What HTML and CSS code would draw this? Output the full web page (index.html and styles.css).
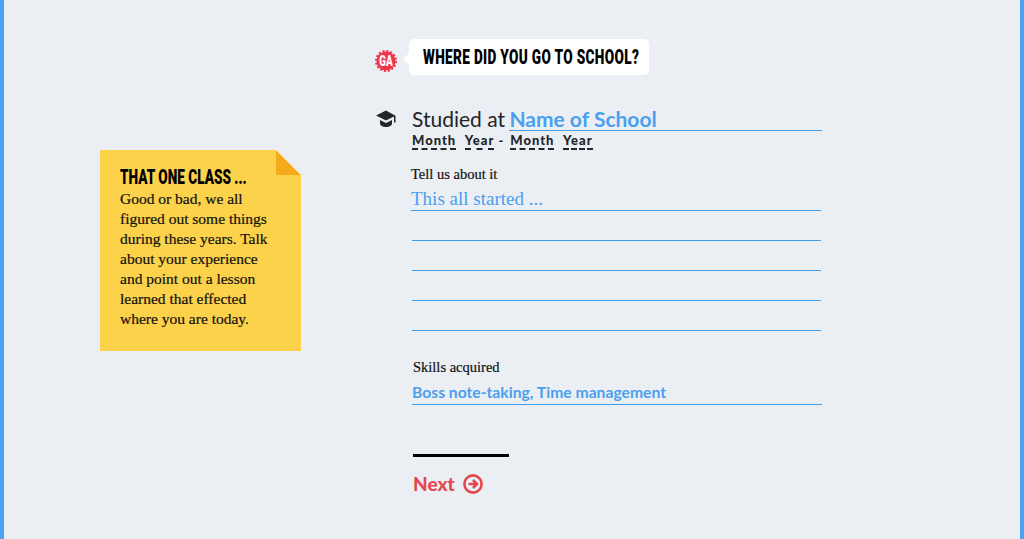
FILE: index.html
```html
<!DOCTYPE html>
<html lang="en">
<head>
  <meta charset="UTF-8" />
  <title>Where did you go to school?</title>
  <link rel="stylesheet" href="styles.css">
</head>
<body>
  <div class="page">
    <aside class="note">
      <h3><span>THAT ONE CLASS ...</span></h3>
      <p>Good or bad, we all<br>figured out some things<br>during these years. Talk<br>about your experience<br>and point out a lesson<br>learned that effected<br>where you are today.</p>
    </aside>

    <main class="content">
      <div class="question">
        <svg class="badge" width="22" height="22" viewBox="0 0 22 22">
          <circle cx="11" cy="11" r="9.500" fill="#f0364f"/>
          <circle cx="11" cy="11" r="10" fill="none" stroke="#f0364f" stroke-width="2" stroke-dasharray="2.100 1.830"/>
          <text class="badge-text" text-anchor="middle" transform="translate(11 15.500) scale(0.7 1)">GA</text>
        </svg>
        <h1 class="bubble"><span>WHERE DID YOU GO TO SCHOOL?</span></h1>
      </div>

      <div class="studied">
        <svg class="cap" width="20" height="18" viewBox="0 0 20 18">
          <path fill="#22252a" d="M10 0.500L0 5.500l10 5 8-4v6h1.500V5.700L10 0.500z"/>
          <path fill="#22252a" d="M4 10v3.700c0 1.500 2.800 3.300 6 3.300s6-1.800 6-3.300V10l-6 3z"/>
        </svg>
        <div class="studied-text">
          <div class="title">Studied at <span class="school">Name of School</span></div>
          <div class="dates"><span>Month</span> <span class="year">Year</span><b>-</b><span>Month</span> <span class="year">Year</span></div>
        </div>
      </div>

      <div class="tell">
        <label class="tell-label">Tell us about it</label>
        <div class="line first">This all started ...</div>
        <div class="line"></div>
        <div class="line"></div>
        <div class="line"></div>
        <div class="line"></div>
      </div>

      <div class="skills">
        <label>Skills acquired</label>
        <div class="skills-input">Boss note-taking, Time management</div>
      </div>

      <div class="rule"></div>
      <a class="next" href="#">Next
        <svg width="20" height="20" viewBox="0 0 20 20" fill="none" stroke="#e5474f" stroke-width="2.600">
          <circle cx="10" cy="10" r="8.600"/>
          <path d="M5.500 10h8M10 6l4 4-4 4"/>
        </svg>
      </a>
    </main>
  </div>
</body>
</html>
```

FILE: styles.css
```css
* {
  box-sizing: border-box;
}

body {
  margin: 0;
  background: #ebeff3;
  color: #22252a;
  font-family: 'Lato', sans-serif;
}

.page {
  display: flex;
  height: 539px;
  padding-left: 96px;
  border-left: 4px solid #4aa3f5;
  border-right: 4px solid #4aa3f5;
  overflow: hidden;
}

/* sticky note */
.note {
  position: relative;
  width: 201px;
  height: 201px;
  margin-top: 150px;
  padding: 17px 0 0 20px;
  background: #fbd249;
  color: #111;
  clip-path: polygon(0 0, 176px 0, 201px 25px, 201px 201px, 0 201px);
}

.note::after {
  content: '';
  position: absolute;
  top: 0;
  right: 0;
  width: 25px;
  height: 25px;
  background: linear-gradient(to top right, #f5ab19 50%, transparent 50%);
}

.note h3 {
  margin: 0;
  font-family: 'Roboto', sans-serif;
  font-size: 20px;
  line-height: 20px;
  font-weight: 900;
  color: #000;
  white-space: nowrap;
}

/* no condensed face installed, so squeeze the heading */
.note h3 span,
.bubble span {
  display: inline-block;
  transform: scaleX(0.68);
  transform-origin: left center;
}

.note p {
  margin: 2px 0 0;
  font-family: 'Liberation Serif', serif;
  font-size: 15.500px;
  line-height: 20px;
  -webkit-text-stroke: 0.2px #111;
}

.content {
  width: 450px;
  margin-left: 74px;
  padding-top: 39px;
}

/* question header */
.question {
  display: flex;
  align-items: center;
  gap: 12px;
}

.badge {
  flex: none;
  margin-top: 7px;
}

.badge-text {
  font-family: 'Roboto', sans-serif;
  font-size: 14px;
  font-weight: 900;
  fill: #fff;
}

.bubble {
  position: relative;
  width: 240px;
  height: 36px;
  margin: 0;
  padding-left: 14px;
  background: #fff;
  border-radius: 5px;
  color: #000;
  font-family: 'Roboto', sans-serif;
  font-size: 20px;
  line-height: 36px;
  font-weight: 900;
  letter-spacing: 0.5px;
  white-space: nowrap;
}

.bubble::before {
  content: '';
  position: absolute;
  left: -6px;
  top: 14px;
  border-top: 6px solid transparent;
  border-bottom: 6px solid transparent;
  border-right: 6px solid #fff;
}

/* studied at */
.studied {
  display: flex;
  margin-top: 32px;
}

.cap {
  flex: none;
  margin: 3px 16px 0 1px;
}

.title {
  font-size: 21px;
  line-height: 24px;
  width: 410px;
  white-space: nowrap;
}

.school {
  display: inline-block;
  width: 313px;
  height: 24px;
  margin-left: -1px;
  border-bottom: 1px solid #3f9eef;
  color: #4a9fee;
  font-weight: 700;
}

.dates {
  font-size: 13px;
  line-height: 18px;
  font-weight: 900;
  letter-spacing: 1px;
  color: #22252a;
}

.dates span {
  border-bottom: 2px dashed #22252a;
  margin-right: 5px;
}

.dates b {
  margin: 0 6px 0 -1px;
}

/* text lines */
.tell {
  margin: 17px 0 0 36px;
  width: 410px;
}

.tell-label {
  display: block;
  font-family: 'Liberation Serif', serif;
  font-size: 14.500px;
  line-height: 16px;
  color: #111;
  -webkit-text-stroke: 0.2px #111;
}

.line {
  height: 30px;
  margin-left: 1px;
  border-bottom: 1px solid #3f9eef;
}

.line.first {
  height: 29px;
  margin-left: 0;
  padding: 7px 0 0 0;
  background-image: none;
  font-family: 'Liberation Serif', serif;
  font-size: 19px;
  line-height: 20px;
  color: #4a9fee;
}

.skills {
  margin: 28px 0 0 38px;
  width: 409px;
}

.skills label {
  display: block;
  font-family: 'Liberation Serif', serif;
  font-size: 14.500px;
  line-height: 16px;
  color: #111;
  -webkit-text-stroke: 0.2px #111;
}

.skills-input {
  height: 30px;
  margin-left: -1px;
  padding-top: 7px;
  border-bottom: 1px solid #3f9eef;
  font-size: 15.700px;
  line-height: 20px;
  font-weight: 700;
  color: #4a9fee;
}

.rule {
  width: 96px;
  height: 3px;
  margin: 49px 0 0 38px;
  background: #000;
}

.next {
  display: inline-flex;
  align-items: center;
  gap: 8px;
  margin: 17px 0 0 38px;
  color: #e5474f;
  font-size: 19px;
  line-height: 20px;
  font-weight: 900;
  text-decoration: none;
}
```
